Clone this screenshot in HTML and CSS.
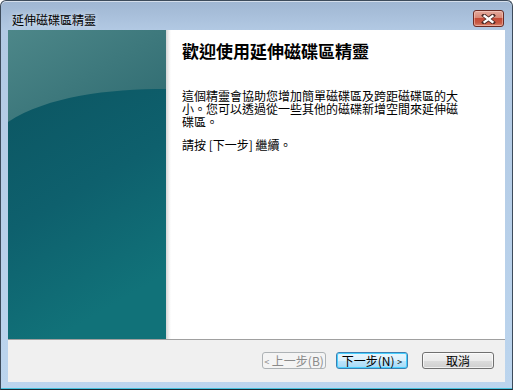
FILE: index.html
```html
<!DOCTYPE html>
<html lang="zh-Hant">
<head>
<meta charset="utf-8">
<title>延伸磁碟區精靈</title>
<link rel="stylesheet" href="styles.css">
</head>
<body>
<div class="window">
  <div class="titlebar">
    <span class="title">延伸磁碟區精靈</span>
    <button class="close" aria-label="關閉">
      <svg width="15" height="10" viewBox="0 0 15 10">
        <path d="M3 1.5 L12 8.5 M12 1.5 L3 8.5" stroke="#4a2a26" stroke-width="4" stroke-linecap="square"/>
        <path d="M3.5 2 L11.5 8 M11.5 2 L3.5 8" stroke="#ffffff" stroke-width="2.2" stroke-linecap="square"/>
      </svg>
    </button>
  </div>
  <div class="client">
    <div class="main">
      <div class="sidebar">
        <svg class="side-art" viewBox="0 0 158 309" preserveAspectRatio="none">
          <defs>
            <linearGradient id="low" x1="0" y1="0" x2="0.3" y2="1">
              <stop offset="0" stop-color="#0b525e"/>
              <stop offset="0.6" stop-color="#0e606d"/>
              <stop offset="1" stop-color="#117279"/>
            </linearGradient>
            <linearGradient id="up" x1="0" y1="0" x2="1" y2="1">
              <stop offset="0" stop-color="#4d8789"/>
              <stop offset="1" stop-color="#2e6a70"/>
            </linearGradient>
          </defs>
          <rect x="0" y="0" width="158" height="309" fill="url(#low)"/>
          <path d="M0 0 H158 V59 C100 59 40 66 0 92 Z" fill="url(#up)"/>
        </svg>
      </div>
      <div class="shade"></div>
      <div class="content">
        <h1 class="heading">歡迎使用延伸磁碟區精靈</h1>
        <p class="text">這個精靈會協助您增加簡單磁碟區及跨距磁碟區的大小。您可以透過從一些其他的磁碟新增空間來延伸磁碟區。</p>
        <p class="text">請按 [下一步] 繼續。</p>
      </div>
    </div>
    <div class="footer">
      <button class="btn btn-back" disabled><span class="chev">&lt;</span> 上一步(B)</button>
      <button class="btn btn-next">下一步(N) <span class="chev">&gt;</span></button>
      <button class="btn btn-cancel">取消</button>
    </div>
  </div>
</div>
</body>
</html>
```

FILE: styles.css
```css
html, body {
  margin: 0;
  padding: 0;
  width: 513px;
  height: 390px;
  overflow: hidden;
  background: #ffffff;
}

body {
  font-family: "Noto Sans CJK TC", "Liberation Sans", sans-serif;
  font-size: 12px;
  color: #000;
}

.window {
  box-sizing: border-box;
  width: 513px;
  height: 390px;
  border: 1px solid #3d4b5b;
  border-bottom-color: #1b2a33;
  border-radius: 6px 6px 0 0;
  background: linear-gradient(#9fb6d2 0px, #b2c9e3 29px, #bcd5ee 100%);
  box-shadow: inset 0 1px 0 rgba(255,255,255,0.55), inset 0 -1px 0 #45c2de;
  display: flex;
  flex-direction: column;
}

.titlebar {
  height: 29px;
  display: flex;
  justify-content: space-between;
  align-items: flex-start;
  padding: 0 8px 0 11px;
}

.title {
  margin-top: 11px;
  font-size: 12px;
  line-height: 15px;
  color: #000;
  text-shadow: 0 0 6px rgba(255,255,255,0.8);
}

.close {
  margin-top: 9px;
  width: 31px;
  height: 17px;
  padding: 0;
  border: 1px solid #6b2b24;
  border-radius: 3px;
  background: linear-gradient(#e3aa9d 0%, #d98876 45%, #c44a36 50%, #c85a44 80%, #dc8a72 100%);
  box-shadow: inset 0 0 0 1px rgba(255,220,210,0.45);
  display: flex;
  align-items: center;
  justify-content: center;
}

.client {
  margin: 0 7px 7px 7px;
  height: 352px;
  display: flex;
  flex-direction: column;
}

.main {
  height: 309px;
  display: flex;
  background: #ffffff;
  border-bottom: 1px solid #a0a0a0;
}

.sidebar {
  width: 158px;
  height: 309px;
  flex: none;
}

.side-art {
  display: block;
  width: 158px;
  height: 309px;
}

.shade {
  width: 5px;
  flex: none;
  background: linear-gradient(to right, #d4d4d4, #f2f2f2 60%, #ffffff);
}

.content {
  flex: 1;
  padding: 10px 0 0 11px;
}

.heading {
  margin: 0;
  font-size: 17px;
  line-height: 21px;
  font-weight: bold;
}

.text {
  margin: 28px 0 0 0;
  width: 282px;
  font-size: 12px;
  line-height: 13px;
}

.text + .text {
  margin-top: 10px;
}

.footer {
  flex: 1;
  background: #f0f0f0;
  display: flex;
  align-items: center;
  justify-content: flex-end;
  padding-right: 11px;
  padding-bottom: 1px;
}

.btn {
  box-sizing: border-box;
  height: 17px;
  width: 72px;
  padding: 0;
  font-family: "Noto Sans CJK TC", "Liberation Sans", sans-serif;
  font-size: 12px;
  line-height: 15px;
  color: #000;
  border: 1px solid #707070;
  border-radius: 3px;
  background: linear-gradient(#f2f2f2 0%, #ebebeb 50%, #dddddd 51%, #cfcfcf 100%);
  box-shadow: inset 0 0 0 1px rgba(255,255,255,0.7);
}

.chev {
  font-size: 9px;
  vertical-align: 1px;
}

.btn-back {
  width: 64px;
  color: #8a8a8a;
  border-color: #adb2b5;
  background: #f4f4f4;
  box-shadow: none;
  margin-right: 10px;
}

.btn-next {
  border-color: #3c7fb1;
  background: linear-gradient(#eaf6fd 0%, #d9f0fc 50%, #bee6fd 51%, #a7d9f5 100%);
  box-shadow: inset 0 0 0 1px #48d0ff;
  margin-right: 14px;
}
```
